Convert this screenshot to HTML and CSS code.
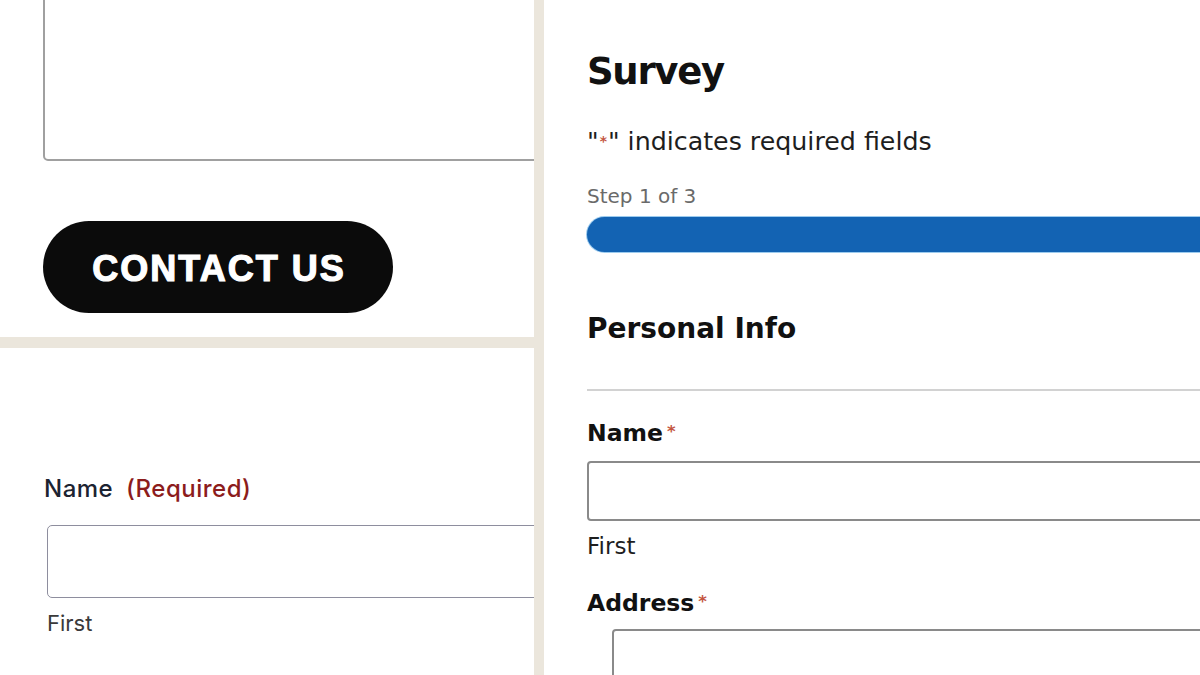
FILE: index.html
```html
<!DOCTYPE html>
<html lang="en">
<head>
  <meta charset="UTF-8" />
  <meta name="viewport" content="width=device-width, initial-scale=1.0"/>
  <title>Forms</title>
  <link rel="stylesheet" href="styles.css">
</head>
<body>

  <div class="collage">
    <div class="left-col">
      <div class="panel contact-panel">
        <textarea class="message-box"></textarea>
        <button class="contact-btn">CONTACT US</button>
      </div>

      <div class="panel name-panel">
        <label class="plain-label">Name <span class="required">(Required)</span></label>
        <input type="text" class="plain-input">
        <div class="plain-sub">First</div>
      </div>
    </div>

    <div class="panel survey-panel">
      <h1 class="survey-title">Survey</h1>
      <p class="required-note">"<span class="star">*</span>" indicates required fields</p>
      <div class="step-label">Step 1 of 3</div>
      <div class="progress"><div class="progress-fill"></div></div>

      <h2 class="section-title">Personal Info</h2>
      <hr class="section-rule">

      <label class="field-label">Name<span class="star">*</span></label>
      <input type="text" class="field-input">
      <div class="field-sub">First</div>

      <label class="field-label address-label">Address<span class="star">*</span></label>
      <input type="text" class="field-input indented">
    </div>
  </div>

</body>
</html>
```

FILE: styles.css
```css
html, body {
  height: 100%;
}
body {
  margin: 0;
  background-color: #ebe6dc;
  overflow: hidden;
}
.collage {
  display: flex;
  height: 675px;
}
.left-col {
  width: 534px;
  display: flex;
  flex-direction: column;
  gap: 11px;
  flex-shrink: 0;
}
.panel {
  background: #fff;
  overflow: hidden;
  box-sizing: border-box;
}

/* top left: message box + button */
.contact-panel {
  height: 337px;
  padding-left: 43px;
  display: flex;
  flex-direction: column;
  align-items: flex-start;
}
.message-box {
  display: block;
  width: calc(100% + 30px);
  height: 201px;
  margin-top: -40px;
  border: 2px solid #a0a0a0;
  border-radius: 5px;
  resize: none;
  box-sizing: border-box;
  background: #fff;
}
.contact-btn {
  margin-top: 60px;
  width: 350px;
  height: 92px;
  border: none;
  border-radius: 46px;
  background: #0b0b0b;
  color: #fff;
  font-family: "Liberation Sans", Arial, sans-serif;
  font-weight: bold;
  font-size: 36px;
  letter-spacing: 2px;
  -webkit-text-stroke: 1.2px #fff;
  padding: 4px 0 0 2px;
  cursor: pointer;
}

/* bottom left: plain name field */
.name-panel {
  flex: 1;
  padding: 127px 0 0 44px;
  font-family: Inter, "Noto Sans", sans-serif;
}
.plain-label {
  display: block;
  font-size: 24px;
  line-height: 1.2;
  font-weight: 500;
  color: #1c2331;
  letter-spacing: 0.5px;
}
.plain-label .required {
  color: #8c1c1c;
  margin-left: 6px;
}
.plain-input {
  display: block;
  margin: 21px 0 0 3px;
  width: calc(100% + 20px);
  height: 73px;
  box-sizing: border-box;
  border: 1.5px solid #8e8e9e;
  border-radius: 5px;
}
.plain-sub {
  margin: 12px 0 0 3px;
  font-size: 22px;
  line-height: 1.2;
  color: #3a3a3a;
}

/* right: survey form */
.survey-panel {
  flex: 1;
  margin-left: 10px;
  padding-left: 43px;
  font-family: "DejaVu Sans", Verdana, sans-serif;
  color: #111;
}
.survey-panel * {
  line-height: 1.2;
}
.survey-title {
  margin: 50px 0 0;
  font-size: 37px;
  letter-spacing: -1.3px;
}
.required-note {
  margin: 33px 0 0;
  font-size: 25.3px;
  color: #1e1e1e;
}
.star {
  color: #c4563f;
  font-size: 0.7em;
  vertical-align: 0.25em;
  margin-left: 4px;
  font-weight: bold;
}
.required-note .star {
  font-size: 0.55em;
  margin: 0 1px;
  vertical-align: 0.3em;
}
.step-label {
  margin-top: 26px;
  font-size: 20px;
  color: #6a6a6a;
}
.progress {
  margin-top: 9px;
  width: calc(100% + 40px);
  height: 35px;
}
.progress-fill {
  height: 100%;
  background: #1363b3;
  border-radius: 18px 0 0 18px;
  box-shadow: 0 0 0 1px #9ccbee;
}
.section-title {
  margin: 60px 0 0;
  font-size: 28px;
  color: #111;
}
.section-rule {
  margin: 44px 0 0;
  width: calc(100% + 40px);
  border: none;
  height: 2px;
  background: #d2d2d2;
}
.field-label {
  display: block;
  margin-top: 28px;
  font-size: 23.5px;
  font-weight: bold;
}
.field-input {
  display: block;
  margin-top: 13px;
  width: calc(100% + 40px);
  height: 60px;
  box-sizing: border-box;
  border: 2px solid #8a8a8a;
  border-radius: 4px;
}
.field-input.indented {
  margin: 12px 0 0 25px;
}
.field-sub {
  margin-top: 12px;
  font-size: 23px;
  color: #1e1e1e;
}
.address-label {
  margin-top: 29px;
}
```
